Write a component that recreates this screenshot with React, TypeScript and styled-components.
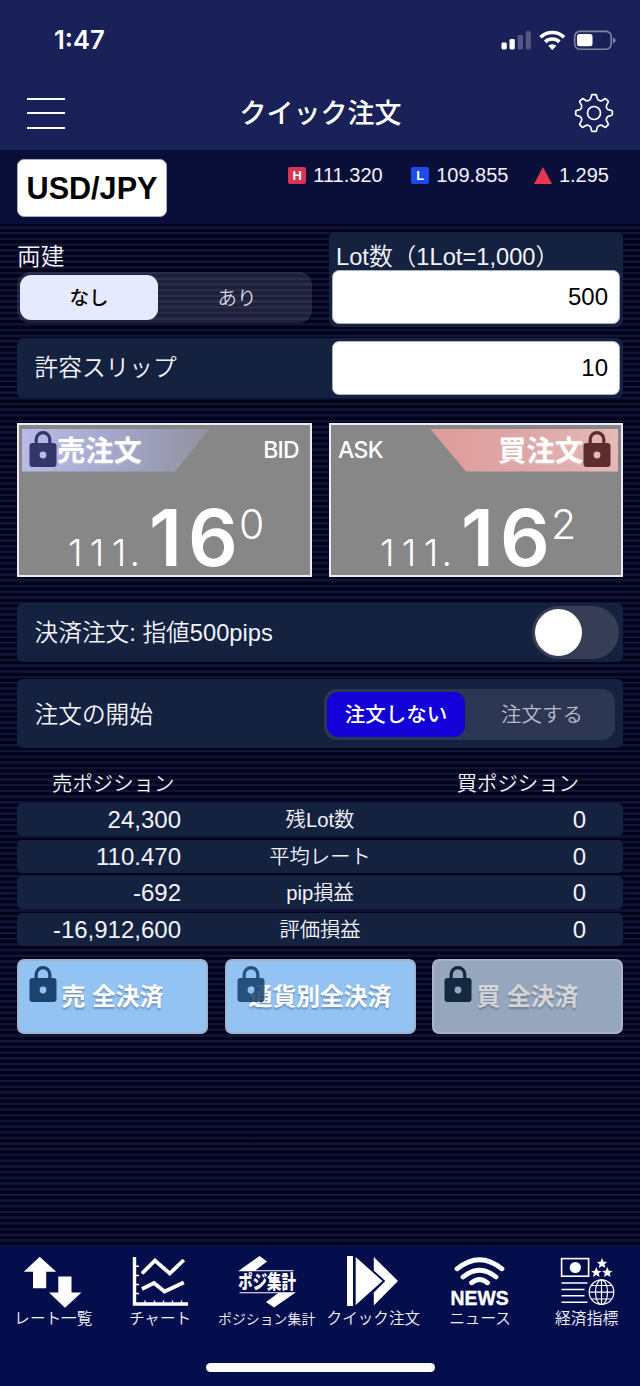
import React from "react";
import styled, { createGlobalStyle, css } from "styled-components";

const GlobalStyle = createGlobalStyle`
  * { box-sizing: border-box; }
  body { margin: 0; background: #03041a; }
`;

const sans = `"Liberation Sans", "Noto Sans CJK JP", sans-serif`;
const system = `Inter, "Noto Sans CJK JP", sans-serif`;

const Screen = styled.div`
  width: 640px;
  height: 1386px;
  display: flex;
  flex-direction: column;
  overflow: hidden;
  color: #f2f3fb;
  font-family: ${sans};
  font-weight: 350;
  font-size: 23.7px;
  white-space: nowrap;
  background: repeating-linear-gradient(180deg, #10143a 0, #10143a 0.9px, #020218 1.5px, #020218 4.1px, #10143a 4.7px, #10143a 5.69px);
`;

const Header = styled.header`
  height: 150px;
  background: #1a2158;
  flex: none;
`;

const StatusBar = styled.div`
  height: 78px;
  padding: 1px 24px 0 54px;
  display: flex;
  align-items: center;
  justify-content: space-between;
`;

const Clock = styled.span`
  font-family: ${system};
  font-weight: 600;
  font-size: 25.5px;
  color: #fff;
`;

const NavBar = styled.div`
  height: 70px;
  padding: 0 26px 0 27px;
  display: grid;
  grid-template-columns: 40px 1fr 40px;
  align-items: center;
`;

const MenuLines = styled.span`
  width: 38px;
  height: 31px;
  border: solid #fff;
  border-width: 2.5px 0;
  display: flex;
  align-items: center;
  &::before {
    content: "";
    flex: 1;
    height: 2.5px;
    background: #fff;
  }
`;

const Title = styled.h1`
  margin: 0;
  padding-top: 2px;
  text-align: center;
  color: #fff;
  font-size: 27px;
  line-height: 40px;
  font-weight: 500;
`;

const QuoteStrip = styled.section`
  height: 75px;
  flex: none;
  background: #0a0f39;
  border-bottom: 1px solid #02031a;
  padding: 9px 31px 0 17px;
  display: flex;
  justify-content: space-between;
`;

const whiteBox = css`
  background: #fff;
  color: #000;
  border: 1.5px solid #a9b0c4;
  border-radius: 7px;
`;

const PairButton = styled.button`
  ${whiteBox};
  width: 150px;
  height: 58px;
  padding: 0;
  font: 700 30.6px/54px ${sans};
`;

const Quotes = styled.div`
  display: flex;
  height: 33px;
  align-items: center;
  font-size: 20px;
`;

const Quote = styled.span<{ $after?: number }>`
  display: flex;
  align-items: center;
  gap: 7px;
  margin-right: ${(p) => p.$after ?? 0}px;
`;

const Badge = styled.span<{ $color: string }>`
  width: 18px;
  height: 17px;
  border-radius: 2px;
  background: ${(p) => p.$color};
  color: #fff;
  font: 700 13px/18px ${sans};
  text-align: center;
`;

const Rise = styled.span`
  border: solid transparent;
  border-width: 0 9px 17px;
  border-bottom-color: #ea3550;
`;

const Body = styled.main`
  flex: 1;
  padding: 7px 17px 0;
`;

const TopRow = styled.div`
  display: flex;
  justify-content: space-between;
  height: 95px;
  margin-bottom: 11px;
`;

const HedgeField = styled.div`
  width: 295px;
  padding-top: 8px;
`;

const FieldLabel = styled.div<{ $indent?: number; $height: number }>`
  height: ${(p) => p.$height}px;
  line-height: 34px;
  padding-left: ${(p) => p.$indent ?? 0}px;
`;

const Segments = styled.div<{ $width: number }>`
  display: flex;
  height: 51px;
  padding: 3px;
  border-radius: 13px;
  background: rgba(120, 120, 140, 0.25);
  width: ${(p) => p.$width}px;
`;

const Segment = styled.button<{ $fill?: string; $ink: string; $size: number }>`
  flex: ${(p) => (p.$fill ? "0 0 138px" : "1")};
  border: 0;
  padding: 0 0 0 ${(p) => (p.$fill ? 0 : 7)}px;
  border-radius: 11px;
  background: ${(p) => p.$fill ?? "transparent"};
  color: ${(p) => p.$ink};
  font: ${(p) => (p.$fill ? 500 : 350)} ${(p) => p.$size}px/44px ${sans};
`;

const LotCard = styled.div`
  width: 294px;
  padding: 8px 3px 0;
  border-radius: 6px;
  background: #14213f;
`;

const Input = styled.div`
  ${whiteBox};
  width: 288px;
  height: 54px;
  padding-right: 11px;
  text-align: right;
  font-size: 24px;
  line-height: 52px;
`;

const Panel = styled.div<{ $height: number; $gap: number; $end: number; $top?: number }>`
  height: ${(p) => p.$height}px;
  margin-bottom: ${(p) => p.$gap}px;
  padding: ${(p) => p.$top ?? 0}px ${(p) => p.$end}px 0 17px;
  display: flex;
  align-items: center;
  justify-content: space-between;
  border-radius: 6px;
  background: #14213f;
`;

const PanelLabel = styled.span`
  padding: 0 0 4px 0.5px;
`;

const PriceRow = styled.div`
  display: flex;
  justify-content: space-between;
  margin-bottom: 26px;
`;

const PriceCard = styled.button<{ $width: number }>`
  width: ${(p) => p.$width}px;
  height: 154px;
  padding: 3px;
  border: 2px solid #eeeaf4;
  background: #878787;
  color: #fff;
  font-family: ${system};
  text-align: left;
`;

const PriceHead = styled.div`
  display: flex;
  justify-content: space-between;
  height: 43px;
`;

const Side = styled.span<{ $pad: string }>`
  padding: ${(p) => p.$pad};
  font-size: 23px;
  font-weight: 500;
  line-height: 43px;
  letter-spacing: -0.7px;
`;

const Ribbon = styled.div<{ $buy?: boolean }>`
  width: 188px;
  display: flex;
  align-items: flex-start;
  justify-content: ${(p) => (p.$buy ? "flex-end" : "flex-start")};
  padding: 2px 7px 0;
  font: 700 28.3px/40px ${sans};
  text-shadow: 0 1px 2px rgba(255, 255, 255, 0.35);
  background: ${(p) =>
    p.$buy
      ? "linear-gradient(90deg, #dd9c99, #dfa9a9 60%, #e4bab9)"
      : "linear-gradient(90deg, #b9bbe8, #a5a6ca 50%, #92929e)"};
  clip-path: ${(p) =>
    p.$buy
      ? "polygon(0 0, 100% 0, 100% 100%, 36px 100%)"
      : "polygon(0 0, 100% 0, 153px 100%, 0 100%)"};
`;

const Price = styled.div`
  display: flex;
  align-items: baseline;
  height: 100px;
  line-height: 131px;
  padding-left: 46px;
`;

const Whole = styled.span`
  font-size: 37px;
  font-weight: 300;
  letter-spacing: 7.3px;
  width: 81px;
`;

const Point = styled.span`
  margin-left: -4px;
`;

const Pips = styled.span`
  font-size: 78px;
  font-weight: 600;
  letter-spacing: 6px;
  width: 91px;
`;

const Fraction = styled.span`
  font-size: 41px;
  font-weight: 300;
  position: relative;
  top: -27px;
  left: -1px;
`;

const Toggle = styled.span`
  width: 87px;
  height: 53px;
  padding: 3px;
  border-radius: 27px;
  background: #373d55;
  &::before {
    content: "";
    display: block;
    width: 47px;
    height: 47px;
    border-radius: 50%;
    background: #fff;
  }
`;

const PositionHead = styled.div`
  display: flex;
  justify-content: space-between;
  height: 55px;
  padding: 0 44px 0 35px;
  font-size: 20.4px;
  line-height: 72px;
`;

const PositionRow = styled.div`
  display: grid;
  grid-template-columns: 164px 278px 127px;
  height: 33px;
  margin-bottom: 3.6px;
  border-radius: 5px;
  background: #14213f;
  line-height: 34px;
`;

const Amount = styled.span`
  text-align: right;
  font-size: 24px;
`;

const Measure = styled.span`
  text-align: center;
  font-size: 20.3px;
`;

const CloseRow = styled.div`
  display: flex;
  justify-content: space-between;
  padding-top: 10px;
`;

const CloseButton = styled.button<{ $off?: boolean }>`
  position: relative;
  width: 191px;
  height: 75px;
  padding: 0;
  border: 2px solid ${(p) => (p.$off ? "#adb3c2" : "#a3b4ca")};
  border-radius: 7px;
  background: ${(p) => (p.$off ? "#95a6bd" : "#92c3f3")};
  color: ${(p) => (p.$off ? "#d5d5d5" : "#fff")};
  font: 700 23.8px/72px ${sans};
  text-shadow: 0 1.5px 1.5px rgba(60, 70, 90, 0.4);
`;

const ButtonLock = styled.span`
  position: absolute;
  left: 10px;
  top: 5px;
  line-height: 0;
`;

const TabBar = styled.nav`
  height: 140px;
  flex: none;
  padding-top: 8px;
  background: #050e4d;
`;

const Tabs = styled.div`
  display: grid;
  grid-template-columns: repeat(6, 1fr);
  height: 109px;
`;

const Tab = styled.div<{ $size: number }>`
  display: flex;
  flex-direction: column;
  align-items: center;
  font-size: ${(p) => p.$size}px;
  line-height: 22px;
`;

const HomeIndicator = styled.div`
  width: 229px;
  height: 9px;
  margin: 0 auto;
  border-radius: 5px;
  background: #fff;
`;

const Lock = ({ ink, hole, opacity = 1 }: { ink: string; hole: string; opacity?: number }) => (
  <svg width="28" height="36" viewBox="0 0 28 36" opacity={opacity}>
    <path d="M7.2 14V8.5a6.8 6.9 0 0 1 13.6 0V14" fill="none" stroke={ink} strokeWidth="3.2" />
    <rect x=".5" y="12" width="27" height="24" rx="3" fill={ink} />
    <circle cx="14" cy="24" r="3.4" fill={hole} />
  </svg>
);

const StatusIcons = () => (
  <svg width="116" height="24" viewBox="500 27 116 24">
    <g fill="#fff">
      <rect x="501.5" y="41.5" width="5.3" height="7" rx="1.4" />
      <rect x="509.5" y="38" width="5.3" height="10.5" rx="1.4" />
      <rect x="517.7" y="34" width="5.3" height="14.5" rx="1.4" opacity=".25" />
      <rect x="525.8" y="30.3" width="5" height="18.2" rx="1.4" opacity=".25" />
      <path d="M552.3 49l-4.1-4.2a6 6 0 0 1 8.2 0z" />
      <rect x="577" y="33" width="15.5" height="12.3" rx="2.5" />
      <path d="M613 36.5q2.6 1 2.6 3t-2.6 3z" opacity=".45" />
    </g>
    <path d="M540.5 36.2a17 17 0 0 1 23.6 0M545.2 40.9a10.3 10.3 0 0 1 14.2 0" fill="none" stroke="#fff" strokeWidth="3.6" />
    <rect x="574.7" y="30.4" width="36.5" height="17.8" rx="5" fill="none" stroke="#fff" strokeOpacity=".45" strokeWidth="1.6" />
  </svg>
);

const gearPath = (() => {
  const point = (x: number, y: number, a: number) =>
    `${(x * Math.cos(a) - y * Math.sin(a)).toFixed(2)} ${(x * Math.sin(a) + y * Math.cos(a)).toFixed(2)}`;
  let d = "";
  for (let i = 0; i < 8; i++) {
    const a = (i * Math.PI) / 4;
    const q = (x: number, y: number) => point(x, y, a);
    d += `${i ? "L" : "M"}${q(-4.4, -13)}C${q(-2.4, -14)} ${q(-3.2, -17)} ${q(-2, -18.3)}L${q(2, -18.3)}C${q(3.2, -17)} ${q(2.4, -14)} ${q(4.4, -13)}`;
  }
  return d + "Z";
})();

const Gear = () => (
  <svg width="40" height="40" viewBox="-20 -20 40 40" fill="none" stroke="#fff" strokeWidth="1.7" strokeLinejoin="round">
    <path d={gearPath} />
    <circle r="6.5" />
  </svg>
);

const RatesIcon = () => (
  <svg width="60" height="54" viewBox="0 0 60 54" fill="#fff">
    <path d="M16.7 2.7L33.2 17.8H23.2V34.3H10V17.8H.8ZM35.3 22.5H48.5V38.5H58.5L42 53.8L26 38.5H35.3Z" />
  </svg>
);

const ChartIcon = () => (
  <svg width="60" height="54" viewBox="0 0 60 54" fill="none" stroke="#fff">
    <path d="M4.5 3V50H58" strokeWidth="3.4" />
    <path d="M12 19.5L25 6.5L39.8 19.5L53.8 6M12 35L24 29L34.5 37.5L53.8 28.5" strokeWidth="3.8" />
    <path d="M6 12.3H9M6 21.5H9M6 30.5H9M6 39.5H9M15 48.5V46.5M24.5 48.5V46.5M33.5 48.5V46.5M42.5 48.5V46.5M51.5 48.5V46.5" strokeWidth="1.4" />
  </svg>
);

const SummaryIcon = () => (
  <svg width="76" height="54" viewBox="-8 0 76 54" fill="#fff">
    <path d="M1 17.3L22.5 2L30 7.5L18.5 16.2H56.5V17.3ZM59 38.2L37 53.5L29 48L41 39.3H2.5V38.2Z" />
    <text transform="translate(1.2 35) scale(.76 1)" fontFamily="Noto Sans CJK JP, sans-serif" fontWeight="900" fontSize="19">
      ポジ集計
    </text>
  </svg>
);

const QuickIcon = () => (
  <svg width="60" height="54" viewBox="0 0 60 54" fill="#fff">
    <path d="M4 2H10V52H4ZM12.7 3L39.5 27L12.7 51ZM30.8 3L55 27L30.8 51.5V38.5L42.3 27L30.8 16.5Z" />
  </svg>
);

const NewsIcon = () => (
  <svg width="76" height="54" viewBox="-8 0 76 54">
    <path d="M7 14.8Q29.5-3.5 52 14.8M13 23Q29.5 9.5 46 23M21.5 28.8Q29.5 22 37.5 28.8" fill="none" stroke="#fff" strokeWidth="4.8" strokeLinecap="round" />
    <text x=".6" y="51" fill="#fff" stroke="#fff" strokeWidth=".4" fontFamily="Liberation Sans, sans-serif" fontWeight="700" fontSize="21" textLength="58" lengthAdjust="spacingAndGlyphs">
      NEWS
    </text>
  </svg>
);

const star = "M0-5.4L1.5-1.8L5.2-1.6L2.4.8L3.3 4.5L0 2.5L-3.3 4.5L-2.4.8L-5.2-1.6L-1.5-1.8Z";

const EconomyIcon = () => (
  <svg width="60" height="54" viewBox="0 0 60 54" fill="none" stroke="#fff">
    <rect x="4.6" y="4.6" width="27" height="17.6" strokeWidth="1.6" />
    <g fill="#fff" stroke="none">
      <circle cx="18.3" cy="13.5" r="5.6" />
      <path d={star} transform="translate(45 9.5)" />
      <path d={star} transform="translate(39.3 18.5)" />
      <path d={star} transform="translate(50.3 18.5)" />
    </g>
    <path d="M4.5 29H30.5M4.5 35.5H27.5M4.5 41.7H27.5M4.5 48.3H30.5" strokeWidth="1.5" />
    <g strokeWidth="1.2">
      <circle cx="44.5" cy="38.2" r="12.3" />
      <ellipse cx="44.5" cy="38.2" rx="6" ry="12.3" />
      <path d="M44.5 26V50.5M32.2 38.2H56.8M34.3 31.5H54.7M34.3 45H54.7" />
    </g>
  </svg>
);

const PriceFigure = ({ fraction }: { fraction: string }) => (
  <Price>
    <Whole>111<Point>.</Point></Whole>
    <Pips>16</Pips>
    <Fraction>{fraction}</Fraction>
  </Price>
);

const positions = [
  ["24,300", "残Lot数", "0"],
  ["110.470", "平均レート", "0"],
  ["-692", "pip損益", "0"],
  ["-16,912,600", "評価損益", "0"],
];

const tabs: [string, React.FC, number][] = [
  ["レート一覧", RatesIcon, 15.6],
  ["チャート", ChartIcon, 15.6],
  ["ポジション集計", SummaryIcon, 13.9],
  ["クイック注文", QuickIcon, 15.6],
  ["ニュース", NewsIcon, 15.6],
  ["経済指標", EconomyIcon, 15.8],
];

export default function App() {
  return (
    <Screen>
      <GlobalStyle />
      <Header>
        <StatusBar>
          <Clock>1:47</Clock>
          <StatusIcons />
        </StatusBar>
        <NavBar>
          <MenuLines />
          <Title>クイック注文</Title>
          <Gear />
        </NavBar>
      </Header>
      <QuoteStrip>
        <PairButton>USD/JPY</PairButton>
        <Quotes>
          <Quote $after={28.5}><Badge $color="#dc3450">H</Badge>111.320</Quote>
          <Quote $after={25.5}><Badge $color="#1d49ee">L</Badge>109.855</Quote>
          <Quote><Rise />1.295</Quote>
        </Quotes>
      </QuoteStrip>
      <Body>
        <TopRow>
          <HedgeField>
            <FieldLabel $height={32}>両建</FieldLabel>
            <Segments $width={295}>
              <Segment $fill="#e6eafe" $ink="#000" $size={19.5}>なし</Segment>
              <Segment $ink="#d4d6e2" $size={19.5}>あり</Segment>
            </Segments>
          </HedgeField>
          <LotCard>
            <FieldLabel $height={30} $indent={4}>Lot数（1Lot=1,000）</FieldLabel>
            <Input>500</Input>
          </LotCard>
        </TopRow>
        <Panel $height={60} $gap={25} $end={3}>
          <PanelLabel>許容スリップ</PanelLabel>
          <Input>10</Input>
        </Panel>
        <PriceRow>
          <PriceCard $width={295}>
            <PriceHead>
              <Ribbon><Lock ink="#33366b" hole="#b9bbe8" />売注文</Ribbon>
              <Side $pad="0 8px 0 0">BID</Side>
            </PriceHead>
            <PriceFigure fraction="0" />
          </PriceCard>
          <PriceCard $width={294}>
            <PriceHead>
              <Side $pad="0 0 0 4px">ASK</Side>
              <Ribbon $buy>買注文<Lock ink="#5e2c2d" hole="#e4bab9" /></Ribbon>
            </PriceHead>
            <PriceFigure fraction="2" />
          </PriceCard>
        </PriceRow>
        <Panel $height={59} $gap={17} $end={4}>
          <PanelLabel>決済注文: 指値500pips</PanelLabel>
          <Toggle />
        </Panel>
        <Panel $height={69} $gap={0} $end={8} $top={2}>
          <PanelLabel>注文の開始</PanelLabel>
          <Segments $width={291}>
            <Segment $fill="#1300d8" $ink="#fff" $size={20.5}>注文しない</Segment>
            <Segment $ink="#b9bdca" $size={20.5}>注文する</Segment>
          </Segments>
        </Panel>
        <PositionHead><span>売ポジション</span><span>買ポジション</span></PositionHead>
        {positions.map(([sell, label, buy]) => (
          <PositionRow key={label}>
            <Amount>{sell}</Amount>
            <Measure>{label}</Measure>
            <Amount>{buy}</Amount>
          </PositionRow>
        ))}
        <CloseRow>
          <CloseButton>
            売 全決済
            <ButtonLock><Lock ink="#1b4370" hole="#92c3f3" /></ButtonLock>
          </CloseButton>
          <CloseButton>
            通貨別全決済
            <ButtonLock><Lock ink="#0b3563" hole="#92c3f3" opacity={0.8} /></ButtonLock>
          </CloseButton>
          <CloseButton $off>
            買 全決済
            <ButtonLock><Lock ink="#14283f" hole="#95a6bd" /></ButtonLock>
          </CloseButton>
        </CloseRow>
      </Body>
      <TabBar>
        <Tabs>
          {tabs.map(([label, Icon, size]) => (
            <Tab key={label} $size={size}><Icon />{label}</Tab>
          ))}
        </Tabs>
        <HomeIndicator />
      </TabBar>
    </Screen>
  );
}
